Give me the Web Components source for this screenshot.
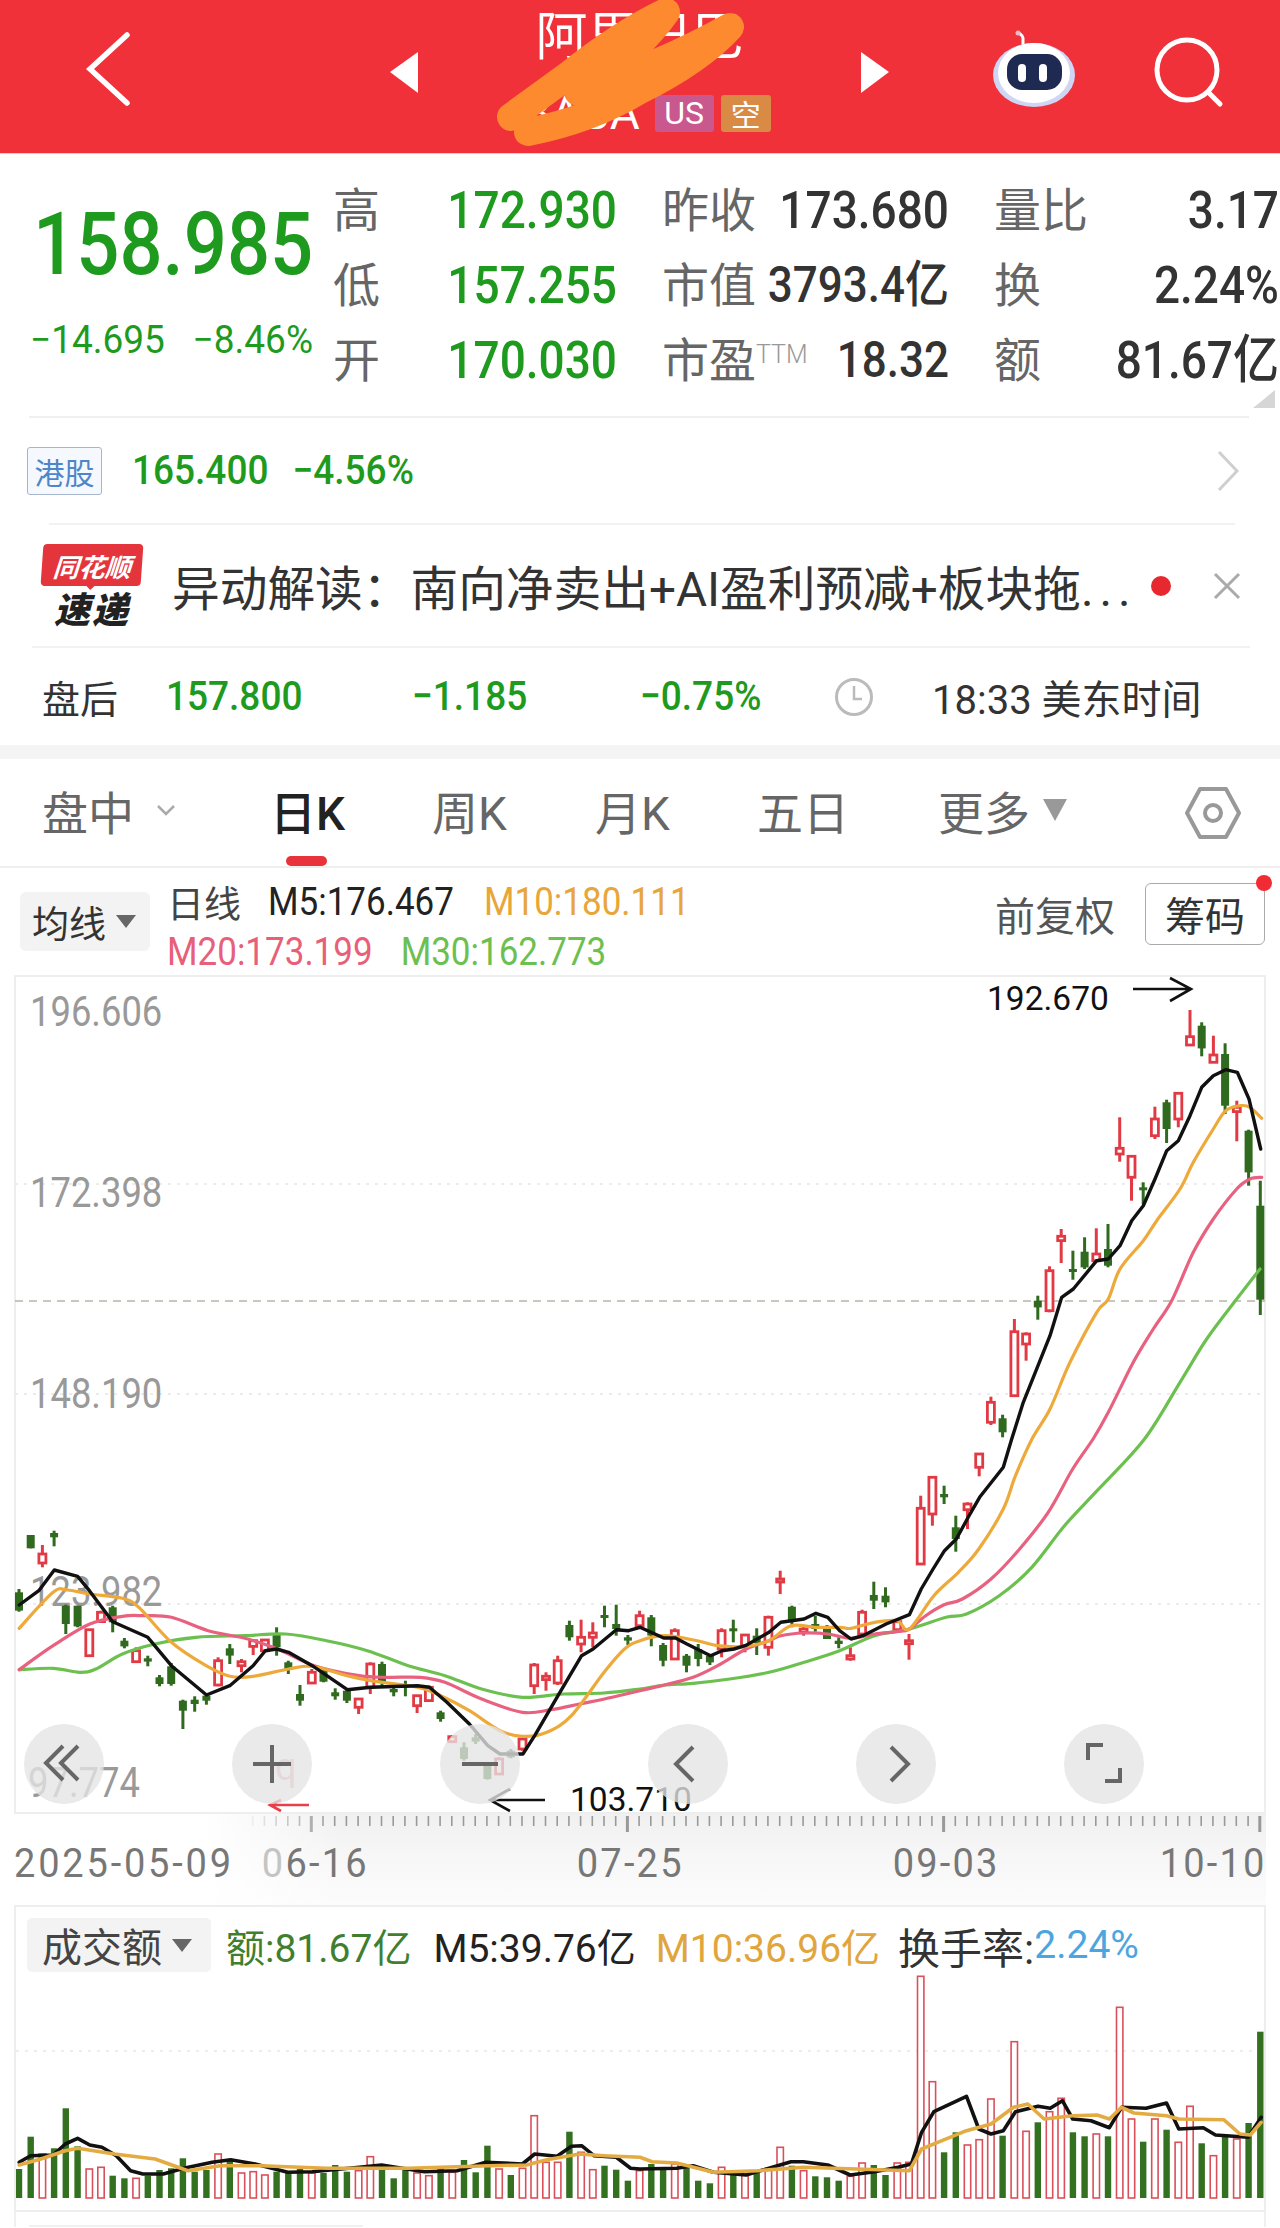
<!DOCTYPE html>
<html lang="zh">
<head>
<meta charset="utf-8">
<title>K线</title>
<style>
  html, body { margin: 0; padding: 0; background: #fff; }
  body { width: 1280px; height: 2228px; overflow: hidden; font-family: Roboto, "Noto Sans CJK SC", sans-serif; color: #333; }
</style>
</head>
<body>
<stock-header></stock-header>
<quote-panel>
  <stat-cell tone="green"><span slot="label">高</span>172.930</stat-cell>
  <stat-cell><span slot="label">昨收</span>173.680</stat-cell>
  <stat-cell><span slot="label">量比</span>3.17</stat-cell>
  <stat-cell tone="green"><span slot="label">低</span>157.255</stat-cell>
  <stat-cell small><span slot="label">市值</span>3793.4亿</stat-cell>
  <stat-cell><span slot="label">换</span>2.24%</stat-cell>
  <stat-cell tone="green"><span slot="label">开</span>170.030</stat-cell>
  <stat-cell small><span slot="label">市盈<sup style="font:300 25px Roboto;color:#999;vertical-align:14px;line-height:0">TTM</sup></span>18.32</stat-cell>
  <stat-cell><span slot="label">额</span>81.67亿</stat-cell>
</quote-panel>
<hk-row></hk-row>
<news-row></news-row>
<after-row></after-row>
<tab-bar></tab-bar>
<ma-legend></ma-legend>
<kline-chart></kline-chart>
<date-axis></date-axis>
<volume-panel></volume-panel>
<next-panel></next-panel>

<script>
const FONT = `Roboto, "Noto Sans CJK SC", sans-serif`;
const GREEN = '#1e9a1e';

// shared base: every element clones its own template in an open shadow root
class Base extends HTMLElement {
  constructor() {
    super();
    this.attachShadow({ mode: 'open' });
    this.shadowRoot.appendChild(this.constructor.tpl.content.cloneNode(true));
  }
}
function tpl(html) {
  const t = document.createElement('template');
  t.innerHTML = html;
  return t;
}

class StockHeader extends Base {
  static tpl = tpl(`
  <style>
    :host { display: flex; height: 153px; background: #f0313a; align-items: flex-start; padding-left: 86px; position: relative; box-sizing: border-box; font-family: ${FONT}; color: #fff; box-shadow: 0 1px 0 #f3c9c9; }
    svg { display: block; flex: none; }
    .center { width: 443px; flex: none; height: 153px; display: flex; flex-direction: column; align-items: center; padding-top: 6px; box-sizing: border-box; }
    .title { font-size: 52px; line-height: 64px; font-weight: 400; white-space: nowrap; }
    .sub { display: flex; align-items: center; margin-top: 24px; height: 38px; padding-left: 14px; }
    .code { font-size: 46px; line-height: 38px; margin-right: 15px; letter-spacing: 0; }
    .tag { height: 37px; display: flex; align-items: center; justify-content: center; border-radius: 3px; }
    .us { width: 59px; background: #c9588e; font-size: 32px; margin-right: 7px; }
    .kong { width: 50px; background: #d98b45; font-size: 30px; }
    .scribble { position: absolute; left: 0; top: 0; width: 1280px; height: 153px; pointer-events: none; }
  </style>
  <svg style="margin-top:30px" width="46" height="80" viewBox="86 30 46 80"><polyline points="127,35 90,69 127,103" fill="none" stroke="#fff" stroke-width="5.5" stroke-linecap="round" stroke-linejoin="miter"/></svg>
  <svg style="margin-left:258px;margin-top:52px" width="28" height="42" viewBox="0 0 28 42"><polygon points="28,0 28,41 0,20" fill="#fff"/></svg>
  <div class="center">
    <div class="title">阿里巴巴</div>
    <div class="sub"><span class="code">BABA</span><span class="tag us">US</span><span class="tag kong">空</span></div>
  </div>
  <svg style="margin-top:52px" width="28" height="42" viewBox="0 0 28 42"><polygon points="0,0 0,41 28,20" fill="#fff"/></svg>
  <svg style="margin-left:103px;margin-top:30px" width="84" height="78" viewBox="990 30 84 78">
    <path d="M1021 47 V38 c0 -3 -4 -4 -5 -6" fill="none" stroke="#fff" stroke-width="3"/>
    <circle cx="1016" cy="33" r="2.5" fill="#f3b8c8"/>
    <ellipse cx="1032" cy="75" rx="41" ry="32" fill="#cfd6f5"/>
    <ellipse cx="1032" cy="73" rx="36" ry="30" fill="#fff"/>
    <rect x="1005" y="54" width="55" height="36" rx="15" fill="#1f2a52"/>
    <rect x="1016" y="64" width="8" height="18" rx="4" fill="#fff"/>
    <rect x="1037" y="64" width="8" height="18" rx="4" fill="#fff"/>
  </svg>
  <svg style="margin-left:76px;margin-top:34px" width="72" height="76" viewBox="1148 34 72 76">
    <circle cx="1183" cy="70" r="30" fill="none" stroke="#fff" stroke-width="5"/>
    <line x1="1205" y1="93" x2="1216" y2="104" stroke="#fff" stroke-width="5" stroke-linecap="round"/>
  </svg>
  <svg class="scribble" viewBox="0 0 1280 153">
    <path d="M511 117 L570 74 Q620 34 666 12 Q640 50 578 92 Q660 66 730 27 Q700 60 640 90 Q590 120 528 132" fill="none" stroke="#fd8a2e" stroke-width="28" stroke-linecap="round" stroke-linejoin="round"/>
  </svg>`);
}

class QuotePanel extends Base {
  static tpl = tpl(`
  <style>
    :host { display: block; height: 265px; position: relative; font-family: ${FONT}; }
    .wrap { display: flex; height: 263px; }
    .left { width: 333px; flex: none; box-sizing: border-box; padding-left: 33px; }
    .price { font-size: 76px; line-height: 80px; margin-top: 51px; color: ${GREEN}; font-weight: 500; transform: scaleY(1.15); white-space: nowrap; }
    .chg { display: flex; justify-content: space-between; width: 283px; margin-left: -3px; margin-top: 36px; font-size: 37px; line-height: 40px; color: ${GREEN}; white-space: nowrap; transform: scaleY(1.05); }
    .grid { display: grid; grid-template-columns: 284px 287px 285px; grid-auto-rows: 75px; column-gap: 45px; padding-top: 20px; }
    .line { position: absolute; left: 29px; right: 31px; bottom: 0; height: 2px; background: #f0f0f0; }
    .corner { position: absolute; left: 1253px; top: 237px; width: 0; height: 0; border-left: 22px solid transparent; border-bottom: 18px solid #d6d6d6; }
  </style>
  <div class="wrap">
    <div class="left">
      <div class="price">158.985</div>
      <div class="chg"><span>−14.695</span><span>−8.46%</span></div>
    </div>
    <div class="grid"><slot></slot></div>
  </div>
  <div class="corner"></div>
  <div class="line"></div>`);
}

class StatCell extends Base {
  static tpl = tpl(`
  <style>
    :host { display: flex; justify-content: space-between; align-items: center; height: 75px; white-space: nowrap; font-family: ${FONT}; }
    .lab { font-size: 47px; color: #666; line-height: 75px; }
    .val { font-size: 46px; font-weight: 500; color: #333; transform: scaleY(1.13); line-height: 75px; display: block; }
    :host([tone="green"]) .val { color: ${GREEN}; }
    :host([small]) .val { font-size: 44px; }
  </style>
  <span class="lab"><slot name="label"></slot></span>
  <span class="val"><slot></slot></span>`);
}

class HkRow extends Base {
  static tpl = tpl(`
  <style>
    :host { display: block; font-family: ${FONT}; }
    .row { display: flex; align-items: center; height: 105px; padding: 0 40px 0 27px; box-sizing: border-box; }
    .tag { width: 75px; height: 48px; box-sizing: border-box; border: 1.5px solid #a5b6cc; border-radius: 3px; background: #f5f9fd; color: #4f86c9; font-size: 30px; display: flex; align-items: center; justify-content: center; }
    .nums { margin-left: 30px; color: ${GREEN}; font-size: 37px; font-weight: 500; transform: scaleY(1.1); display: flex; gap: 24px; }
    svg { margin-left: auto; }
    .line { height: 2px; margin: 0 45px 0 49px; background: #f2f2f2; }
  </style>
  <div class="row">
    <span class="tag">港股</span>
    <div class="nums"><span>165.400</span><span>−4.56%</span></div>
    <svg width="24" height="42" viewBox="0 0 24 42"><polyline points="3,2 21,21 3,40" fill="none" stroke="#cfcfcf" stroke-width="3"/></svg>
  </div>
  <div class="line"></div>`);
}

class ThsLogo extends Base {
  static tpl = tpl(`
  <style>
    :host { display: block; width: 104px; height: 84px; position: relative; font-family: ${FONT}; flex: none; }
    .bubble { width: 100px; height: 42px; margin-left: 2px; background: #e4343c; border-radius: 4px; color: #fff; font-size: 26px; font-weight: 700; font-style: italic; display: flex; align-items: center; justify-content: center; transform: skewX(-4deg); }
    .bubble::after { content: ""; position: absolute; left: 44px; top: 40px; border: 6px solid transparent; border-top-color: #e4343c; }
    .sub { margin-top: 5px; padding-left: 14px; font-size: 36px; line-height: 40px; font-weight: 900; font-style: italic; color: #222; letter-spacing: 2px; }
  </style>
  <div class="bubble">同花顺</div>
  <div class="sub">速递</div>`);
}

class NewsRow extends Base {
  static tpl = tpl(`
  <style>
    :host { display: block; font-family: ${FONT}; }
    .row { display: flex; align-items: center; height: 121px; padding-left: 40px; box-sizing: border-box; }
    .txt { margin-left: 28px; width: 940px; font-size: 47.7px; color: #333; white-space: nowrap; flex: none; }
    .txt i { font-style: normal; letter-spacing: 6px; }
    .dot { width: 20px; height: 20px; margin-left: 39px; border-radius: 50%; background: #e8282f; flex: none; }
    svg { margin-left: 41px; }
    .line { height: 2px; margin: 0 30px 0 32px; background: #f2f2f2; }
  </style>
  <div class="row">
    <ths-logo></ths-logo>
    <span class="txt">异动解读：南向净卖出+AI盈利预减+板块拖<i>...</i></span>
    <span class="dot"></span>
    <svg width="30" height="30" viewBox="0 0 30 30"><path d="M3 3 L27 27 M27 3 L3 27" stroke="#aaa" stroke-width="3" fill="none"/></svg>
  </div>
  <div class="line"></div>`);
}

class AfterRow extends Base {
  static tpl = tpl(`
  <style>
    :host { display: grid; grid-template-columns: 124px 246px 228px 195px 97px auto; align-items: center; height: 97px; padding-left: 42px; font-family: ${FONT}; white-space: nowrap; }
    .lab { font-size: 38px; color: #333; }
    .n { font-size: 37px; font-weight: 500; color: ${GREEN}; transform: scaleY(1.12); display: block; }
    .t { font-size: 40px; color: #333; }
    svg { display: block; }
  </style>
  <span class="lab">盘后</span>
  <span class="n">157.800</span>
  <span class="n">−1.185</span>
  <span class="n">−0.75%</span>
  <svg width="40" height="40" viewBox="0 0 40 40" style="margin-left:-1px"><circle cx="20" cy="20" r="17.5" fill="none" stroke="#bbb" stroke-width="3"/><polyline points="20,9 20,22 28,22" fill="none" stroke="#bbb" stroke-width="2.5"/></svg>
  <span class="t">18:33 美东时间</span>`);
}

class TabBar extends Base {
  static tpl = tpl(`
  <style>
    :host { display: grid; grid-template-columns: 228px 162px 163px 162px 181px 247px auto; align-items: center; height: 109px; margin-top: 14px; padding-left: 42px; box-sizing: border-box; border-bottom: 2px solid #efefef; font-family: ${FONT}; font-size: 46px; color: #666; white-space: nowrap; box-shadow: 0 -14px 0 #f4f4f4; }
    .item { position: relative; display: flex; align-items: center; height: 107px; box-sizing: border-box; padding-bottom: 6px; }
    .on { color: #222; font-weight: 500; }
    .on::after { content: ""; position: absolute; left: 16px; bottom: 0; width: 41px; height: 10px; border-radius: 5px; background: #e8323c; }
    svg { display: block; }
    .tri { width: 0; height: 0; margin-left: 13px; border: 12px solid transparent; border-top: 22px solid #999; border-bottom: 0; }
  </style>
  <div class="item">盘中<svg style="margin-left:22px" width="20" height="12" viewBox="0 0 20 12"><polyline points="2,2 10,10 18,2" fill="none" stroke="#aaa" stroke-width="2.5"/></svg></div>
  <div class="item on">日K</div>
  <div class="item">周K</div>
  <div class="item">月K</div>
  <div class="item">五日</div>
  <div class="item">更多<span class="tri"></span></div>
  <svg width="56" height="54" viewBox="1184 787 56 54"><polygon points="1186,814 1199,790 1225,790 1238,814 1225,838 1199,838" fill="none" stroke="#999" stroke-width="4" stroke-linejoin="round"/><circle cx="1212" cy="814" r="8" fill="none" stroke="#999" stroke-width="4"/></svg>`);
}

class MaLegend extends Base {
  static tpl = tpl(`
  <style>
    :host { display: flex; height: 107px; padding-left: 20px; box-sizing: border-box; font-family: ${FONT}; white-space: nowrap; }
    .sel { margin-top: 24px; width: 130px; height: 59px; box-sizing: border-box; padding-left: 12px; background: #f3f3f3; border-radius: 6px; display: flex; align-items: center; font-size: 37px; color: #333; flex: none; }
    .sel i { width: 0; height: 0; margin-left: 10px; border: 10px solid transparent; border-top: 13px solid #666; border-bottom: 0; }
    .col { margin-left: 17px; padding-top: 9px; }
    .l { display: flex; height: 50px; align-items: center; font-size: 35px; }
    .l span { display: block; transform: scaleY(1.1); }
    .l .cn { font-size: 37px; color: #444; transform: none; margin-right: 27px; }
    .m5 { color: #222; margin-right: 30px; }
    .m10 { color: #e8a63a; }
    .m20 { color: #e85f7a; margin-right: 28px; }
    .m30 { color: #6cc04f; }
    .right { margin-left: auto; display: flex; align-items: center; height: 62px; margin-top: 15px; padding-right: 15px; font-size: 40px; color: #555; }
    .btn { position: relative; margin-left: 30px; width: 120px; height: 62px; box-sizing: border-box; border: 1.5px solid #aaa; border-radius: 6px; display: flex; align-items: center; justify-content: center; color: #333; }
    .btn::after { content: ""; position: absolute; right: -8px; top: -9px; width: 16px; height: 16px; border-radius: 50%; background: #f02b33; }
  </style>
  <div class="sel">均线<i></i></div>
  <div class="col">
    <div class="l"><span class="cn">日线</span><span class="m5">M5:176.467</span><span class="m10">M10:180.111</span></div>
    <div class="l"><span class="m20">M20:173.199</span><span class="m30">M30:162.773</span></div>
  </div>
  <div class="right">前复权<div class="btn">筹码</div></div>`);
}

// candles: [colour, wick top, body top, body bottom, wick bottom], as read off the crops
const CANDLES_A = `g 450 460 515 518|g 288 288 328 328|r 318 345 372 385|g 275 282 295 322|g 497 500 555 585|g 500 500 562 565|r 572 572 650 650|r 515 520 548 552|g 500 505 550 580|g 597 605 622 628|r 625 635 668 672|g 650 658 668 682|g 708 715 735 742|g 672 682 735 740|g 782 785 815 870|g 772 782 795 818|g 765 770 785 797|r 655 665 738 742|g 615 628 650 675|r 660 668 680 700|r 600 605 622 648|r 600 603 635 640|g 565 585 625 650|g 665 670 690 705|g 738 765 785 800|r 690 700 732 735|g 685 690 728 730|g 748 760 772 782|g 750 755 785 792|r 778 780 805 825|r 670 675 745 765|g 668 675 730 745|g 740 750 760 772|g 725 738 742 772|r 768 770 800 822|r 740 745 785 788|g 815 820 840 848|r 888 893 908 912|g 910 925 960 965|g 885 895 908 915|g 975 975 1020 1022|r 955 960 1005 1008|g 930 935 955 958|r 897 900 930 935|r 672 678 740 765|r 700 712 722 755|r 650 665 732 738|g 545 558 595 605|r 542 595 615 640|r 550 582 595 625|g 500 528 535 565|g 497 555 570 590|g 588 595 605 618|r 515 530 560 565|g 528 535 590 622|g 612 618 665 682|r 568 575 660 662|g 645 650 680 700|g 615 630 660 682|g 645 650 670 678|r 568 575 630 655|g 542 568 575 610|r 585 588 620 640|g 568 590 612 648|r 530 535 625 650|r 395 420 428 465|g 500 503 545 565|r 562 570 580 590|g 530 555 570 578|g 558 568 600 600|g 595 605 615 628|r 625 650 660 665|r 512 520 585 590|g 428 468 485 510|g 445 470 490 505|r 540 548 572 575|r 585 605 612 662|r 170 208 375 378|r 112 115 225 260|g 140 165 175 195|g 230 265 300 338|r 190 195 212 270|r 45 45 85 112`;
const CANDLES_B = `r 1313 1330 1390 1398|g 1367 1378 1420 1435|r 1080 1118 1310 1312|r 1120 1125 1155 1205|g 1010 1025 1045 1082|r 922 935 1055 1060|r 810 832 845 912|g 875 930 938 962|g 835 878 925 930|r 808 885 905 908|g 795 870 920 925|r 475 568 585 608|r 592 592 655 725|g 670 685 690 735|r 443 480 530 540|g 422 430 510 552|r 403 403 480 505|r 153 233 258 258|g 190 200 268 292|r 230 288 310 312|g 253 285 440 465|r 425 445 458 547|g 512 515 640 680|g 665 740 1022 1068`;

const barX = i => 19 + 11.71 * i;
// crop coordinates to page coordinates
const a3 = (x, y) => [x / 2.45, 1440 + y / 3];
const a4 = (x, y) => [640 + x / 2.45, 1440 + y / 3];
const a5 = (x, y) => [860 + x / 3, 960 + y / 3];
const pts = (fn, list) => {
  const out = [];
  for (let i = 0; i < list.length; i += 2) out.push(fn(list[i], list[i + 1]));
  return out;
};
const poly = (points, color, w) => `<polyline points="${points.map(p => p[0].toFixed(1) + ',' + p[1].toFixed(1)).join(' ')}" fill="none" stroke="${color}" stroke-width="${w}" stroke-linejoin="round" stroke-linecap="round"/>`;
// catmull-rom through the points, for the slower averages
function curve(p, color, w) {
  let d = `M${p[0][0].toFixed(1)} ${p[0][1].toFixed(1)}`;
  for (let i = 0; i < p.length - 1; i++) {
    const a = p[Math.max(i - 1, 0)], b = p[i], c = p[i + 1], e = p[Math.min(i + 2, p.length - 1)];
    const c1 = [b[0] + (c[0] - a[0]) / 6, b[1] + (c[1] - a[1]) / 6];
    const c2 = [c[0] - (e[0] - b[0]) / 6, c[1] - (e[1] - b[1]) / 6];
    d += ` C${c1[0].toFixed(1)} ${c1[1].toFixed(1)} ${c2[0].toFixed(1)} ${c2[1].toFixed(1)} ${c[0].toFixed(1)} ${c[1].toFixed(1)}`;
  }
  return `<path d="${d}" fill="none" stroke="${color}" stroke-width="${w}" stroke-linecap="round"/>`;
}

const MA5 = [
  ...pts(a3, [47,498,95,455,133,393,190,412,219,455,276,548,362,595,420,680,506,768,563,740,620,680,650,635,678,630,707,640,765,680,851,752,908,745,1023,740,1052,745,1095,790,1150,855,1195,920,1225,945,1281,945,1310,890,1367,770,1425,650,1453,630,1510,572,1540,575]),
  ...pts(a4, [0,565,58,597,87,597,115,615,173,650,201,635,230,630,258,620,316,580,345,550,402,540,431,523,460,535,489,575,517,600,546,590,603,555,660,527,689,450,718,390,746,335,775,300,804,235,832,175,890,85]),
  ...pts(a5, [455,1440,490,1330,570,1130,605,1015,640,990,710,905,745,900,780,860,815,785,850,740,885,660,920,575,955,545,990,470,1025,385,1060,350,1097,332,1132,340,1167,420,1202,570])
];
const MA10 = [
  ...pts(a3, [47,568,130,460,165,453,220,465,300,478,340,505,420,610,505,680,563,712,620,712,707,690,765,682,851,710,908,725,1023,745,1080,770,1150,815,1225,875,1281,892,1340,880,1400,830,1480,700,1530,630]),
  ...pts(a4, [0,605,60,590,140,605,190,620,260,622,316,605,370,560,430,565,490,565,517,568,575,550,630,545,660,570,720,470,780,400,830,330,890,210,920,110]),
  ...pts(a5, [516,1440,570,1350,630,1210,710,1060,745,1020,780,930,850,845,890,785,960,690,1000,610,1060,510,1097,455,1140,440,1170,445,1205,478])
];
const MA20 = [
  ...pts(a3, [47,692,130,620,220,555,300,532,350,530,420,535,510,575,600,598,680,630,770,680,880,710,950,715,1030,715,1090,730,1180,780,1280,820,1350,812,1420,795,1500,775]),
  ...pts(a4, [0,755,60,738,130,715,190,680,260,630,316,605,345,590,402,582,460,585,517,598,575,585,630,578,660,570,700,530,745,497,790,480,860,420,930,330,1000,220,1060,90,1110,0]),
  ...pts(a5, [745,1360,820,1210,880,1110,935,1025,1000,880,1060,780,1130,690,1170,660,1205,655])
];
const MA30 = [
  ...pts(a3, [47,692,130,688,195,700,235,690,300,645,380,615,480,595,600,590,700,585,800,605,900,635,1000,680,1090,710,1180,750,1280,775,1380,765,1480,762]),
  ...pts(a4, [0,750,60,738,130,733,220,720,316,700,402,670,489,635,575,590,660,570,750,535,800,525,880,470,960,385,1040,260,1120,155,1236,0]),
  ...pts(a5, [960,1270,1040,1140,1130,1020,1200,930])
];

function candleSvg(c, i, base) {
  const [k, wt, bt, bb, wb] = c.split(' ');
  const y = v => base + (+v) / 3;
  const x = barX(i).toFixed(1);
  const col = k === 'g' ? '#2f6a1e' : '#e23a44';
  let s = `<line x1="${x}" x2="${x}" y1="${y(wt).toFixed(1)}" y2="${y(wb).toFixed(1)}" stroke="${col}" stroke-width="3"/>`;
  const h = Math.max(y(bb) - y(bt), 3).toFixed(1);
  if (k === 'g') {
    s += `<rect x="${(barX(i) - 4).toFixed(1)}" y="${y(bt).toFixed(1)}" width="8" height="${h}" fill="${col}"/>`;
  } else {
    s += `<rect x="${(barX(i) - 3.5).toFixed(1)}" y="${y(bt).toFixed(1)}" width="7" height="${h}" fill="#fff" stroke="${col}" stroke-width="2.8"/>`;
  }
  return s;
}

function axisLabel(x, y, t) {
  return `<text transform="translate(${x} ${y}) scale(1 1.15)" font-size="36.4" fill="#999">${t}</text>`;
}

class RoundBtn extends Base {
  static tpl = tpl(`
  <style>
    :host { display: flex; width: 80px; height: 80px; border-radius: 50%; background: rgba(228,228,228,.78); align-items: center; justify-content: center; }
    ::slotted(svg) { display: block; }
  </style>
  <slot></slot>`);
}

const ICON = (d, w = 4) => `<svg width="50" height="50" viewBox="0 0 50 50"><path d="${d}" fill="none" stroke="#666" stroke-width="${w}"/></svg>`;

class KlineChart extends Base {
  static tpl = tpl(`
  <style>
    :host { display: block; position: relative; width: 1252px; height: 839px; margin-left: 14px; font-family: ${FONT}; }
    svg.main { display: block; width: 1252px; height: 839px; font-family: Roboto, sans-serif; overflow: visible; }
    .btns { position: absolute; left: 10px; bottom: 10px; display: flex; gap: 128px; }
  </style>
  <svg class="main" viewBox="14 976 1252 839"></svg>
  <div class="btns">
    <round-btn>${ICON('M24 7 L7 24 L24 41 M39 7 L22 24 L39 41')}</round-btn>
    <round-btn>${ICON('M6 25 H44 M25 6 V44')}</round-btn>
    <round-btn>${ICON('M7 25 H43')}</round-btn>
    <round-btn>${ICON('M30 8 L13 25 L30 42')}</round-btn>
    <round-btn>${ICON('M20 8 L37 25 L20 42')}</round-btn>
    <round-btn>${ICON('M24 6 H9 V21 M41 29 V42 H26')}</round-btn>
  </div>`);
  connectedCallback() {
    const svg = this.shadowRoot.querySelector('svg.main');
    let s = '';
    s += `<rect x="15" y="977" width="1250" height="837" fill="none" stroke="#eee" stroke-width="2"/>`;
    [1185, 1395, 1605].forEach(y => {
      s += `<line x1="15" x2="1265" y1="${y}" y2="${y}" stroke="#e6e6e6" stroke-width="1.5" stroke-dasharray="3 6"/>`;
    });
    s += `<line x1="15" x2="1265" y1="1302" y2="1302" stroke="#b5b5a8" stroke-width="1.5" stroke-dasharray="8 6"/>`;
    s += axisLabel(30, 1027, '196.606') + axisLabel(30, 1208, '172.398') + axisLabel(30, 1409, '148.190') + axisLabel(30, 1607, '123.982') + axisLabel(28, 1798, '97.774');
    CANDLES_A.split('|').forEach((c, i) => { s += candleSvg(c, i, 1440); });
    CANDLES_B.split('|').forEach((c, i) => { s += candleSvg(c, i + 83, 960); });
    s += curve(MA30, '#6cc04f', 3.2) + curve(MA20, '#e8617f', 3.2) + curve(MA10, '#eda93a', 3.2) + poly(MA5, '#111', 3.4);
    // hand drawn high / low marks
    s += `<text x="987" y="1011" font-size="33.5" fill="#111">192.670</text>`;
    s += `<path d="M1133 990 H1191 M1170 979 L1191 990 L1170 1002" fill="none" stroke="#111" stroke-width="2.6"/>`;
    s += `<text x="570" y="1812" font-size="33.5" fill="#111">103.710</text>`;
    s += `<path d="M545 1801 H490 M510 1790 L490 1801 L510 1812" fill="none" stroke="#111" stroke-width="2.6"/>`;
    s += `<path d="M309 1806 H270 M281 1801 L270 1806 L281 1812" fill="none" stroke="#e8404a" stroke-width="2.6"/>`;
    s += `<text x="275" y="1781" font-size="38" fill="#e8aeb8">q</text>`;
    svg.innerHTML = s;
  }
}

class DateAxis extends Base {
  static tpl = tpl(`
  <style>
    :host { display: block; width: 1252px; height: 91px; margin-left: 14px; box-sizing: border-box; background: linear-gradient(to right, #fff 190px, rgba(255,255,255,0) 330px), linear-gradient(to bottom, #f0f0f0, #f6f6f6 40%, #fcfcfc); font-family: ${FONT}; }
    svg { display: block; width: 1252px; height: 24px; }
    .row { display: flex; margin-top: 1px; font-size: 38px; line-height: 48px; color: #777; letter-spacing: 2.2px; white-space: nowrap; }
    .row span { display: block; transform: scaleY(1.06); }
    .row b { font-weight: 400; color: #c4c4c4; }
  </style>
  <svg viewBox="14 1815 1252 24"></svg>
  <div class="row">
    <span style="letter-spacing:2.8px">2025-05-09</span>
    <span style="margin-left:28px"><b>0</b>6-16</span>
    <span style="margin-left:208px">07-25</span>
    <span style="margin-left:209px">09-03</span>
    <span style="margin-left:160px">10-10</span>
  </div>`);
  connectedCallback() {
    let s = '';
    for (let i = 20; i < 107; i++) {
      const x = barX(i) - 0.5;
      const big = i === 25 || i === 52 || i === 79 || i === 106;
      const alpha = Math.min(1, (i - 19) / 8);
      s += `<line x1="${x.toFixed(1)}" x2="${x.toFixed(1)}" y1="1817" y2="${big ? 1833 : 1827}" stroke="#999" stroke-width="${big ? 3 : 1.6}" opacity="${alpha.toFixed(2)}"/>`;
    }
    this.shadowRoot.querySelector('svg').innerHTML = s;
  }
}

// amount bars: top y read off the crops, positive = green, negative = red (hollow)
const VOL = [840,743,-795,778,658,772,-840,-835,860,868,-868,860,843,838,808,848,843,-795,815,-852,-848,-858,848,852,840,-852,852,828,848,-845,-803,840,868,838,-852,-860,835,-850,813,850,770,-840,858,-838,-680,-820,-820,728,-790,-842,830,842,875,-845,825,840,-825,835,875,883,-835,850,-858,850,-838,-775,830,-845,862,865,875,-862,-822,828,858,-822,-820,-262,-578,790,730,-768,-752,-630,740,-458,-727,700,-668,-628,730,742,-735,742,-355,-690,758,-690,722,-760,-652,763,-800,740,-750,702,428];

const v6 = (x, y) => [x / 2.45, 1890 + y / 3];
const v7 = (x, y) => [640 + x / 2.45, 1890 + y / 3];
const VMA5 = [
  ...pts(v6, [47,820,75,800,130,798,160,765,190,748,220,768,250,775,285,800,320,845,350,855,400,855,450,838,520,820,565,812,625,825,705,850,765,848,880,835,935,828,1040,848,1120,845,1190,820,1280,825,1310,795,1365,802,1400,772,1425,770,1455,800,1510,805,1545,838]),
  ...pts(v7, [0,840,90,838,130,830,180,850,260,858,310,840,370,818,400,818,460,828,515,858,575,848,632,835,665,825,690,730,720,668,800,622,830,720,860,735,890,725,920,668,975,652,1005,658,1035,635,1060,690,1105,695,1150,716,1180,655,1240,658,1290,642,1320,720,1380,716,1410,738,1490,745,1522,685])
];
const VMA10 = [
  ...pts(v6, [47,828,100,810,160,785,190,778,280,795,380,810,460,845,540,830,640,830,800,838,1000,838,1200,830,1290,828,1340,812,1420,795,1480,800]),
  ...pts(v7, [0,805,30,818,90,822,180,850,290,845,400,835,660,845,690,780,740,755,800,725,860,705,915,655,950,645,990,690,1060,680,1120,678,1150,690,1180,655,1210,672,1290,680,1320,690,1430,692,1470,735,1495,738,1522,700])
];

class VolumePanel extends Base {
  static tpl = tpl(`
  <style>
    :host { display: block; width: 1252px; height: 307px; margin-left: 14px; box-sizing: border-box; border: 2px solid #eee; padding-top: 11px; font-family: ${FONT}; white-space: nowrap; }
    .head { display: flex; align-items: center; height: 54px; padding-left: 11px; font-size: 39px; }
    .sel { width: 184px; height: 54px; box-sizing: border-box; padding-left: 15px; background: #f3f3f3; border-radius: 5px; display: flex; align-items: center; font-size: 40px; color: #444; flex: none; margin-right: 15px; }
    .sel i { width: 0; height: 0; margin-left: 10px; border: 10px solid transparent; border-top: 13px solid #666; border-bottom: 0; }
    .a { color: #3f7f2f; margin-right: 22px; }
    .b { color: #222; margin-right: 20px; }
    .c { color: #e0a53c; margin-right: 18px; }
    .d { color: #333; font-size: 42px; }
    .e { color: #4ba6e0; }
    svg { display: block; width: 1248px; height: 238px; }
  </style>
  <div class="head">
    <div class="sel">成交额<i></i></div>
    <span class="a">额:81.67亿</span><span class="b">M5:39.76亿</span><span class="c">M10:36.96亿</span><span class="d">换手率:</span><span class="e">2.24%</span>
  </div>
  <svg viewBox="16 1973 1248 238"></svg>`);
  connectedCallback() {
    const base = 2199;
    let s = `<line x1="16" x2="1264" y1="2052" y2="2052" stroke="#e8e8e8" stroke-width="1.5" stroke-dasharray="3 6"/>`;
    VOL.forEach((v, i) => {
      const top = 1890 + Math.abs(v) / 3;
      const x = barX(i);
      if (v > 0) {
        s += `<rect x="${(x - 3.2).toFixed(1)}" y="${top.toFixed(1)}" width="6.4" height="${(base - top).toFixed(1)}" fill="#33701f"/>`;
      } else {
        s += `<rect x="${(x - 3.2).toFixed(1)}" y="${top.toFixed(1)}" width="6.4" height="${(base - top).toFixed(1)}" fill="#fff" stroke="#d9505a" stroke-width="1.6"/>`;
      }
    });
    s += poly(VMA5, '#111', 3.6) + poly(VMA10, '#e4ab43', 3.6);
    this.shadowRoot.querySelector('svg').innerHTML = s;
  }
}

class NextPanel extends Base {
  static tpl = tpl(`
  <style>
    :host { display: block; width: 1252px; height: 15px; margin-left: 14px; box-sizing: border-box; border-left: 2px solid #f0f0f0; border-right: 2px solid #f0f0f0; padding: 13px 0 0 13px; }
    div { width: 334px; height: 2px; background: #f0f0f0; }
  </style>
  <div></div>`);
}

customElements.define('stock-header', StockHeader);
customElements.define('quote-panel', QuotePanel);
customElements.define('stat-cell', StatCell);
customElements.define('hk-row', HkRow);
customElements.define('ths-logo', ThsLogo);
customElements.define('news-row', NewsRow);
customElements.define('after-row', AfterRow);
customElements.define('tab-bar', TabBar);
customElements.define('ma-legend', MaLegend);
customElements.define('round-btn', RoundBtn);
customElements.define('kline-chart', KlineChart);
customElements.define('date-axis', DateAxis);
customElements.define('volume-panel', VolumePanel);
customElements.define('next-panel', NextPanel);
</script>
</body>
</html>
